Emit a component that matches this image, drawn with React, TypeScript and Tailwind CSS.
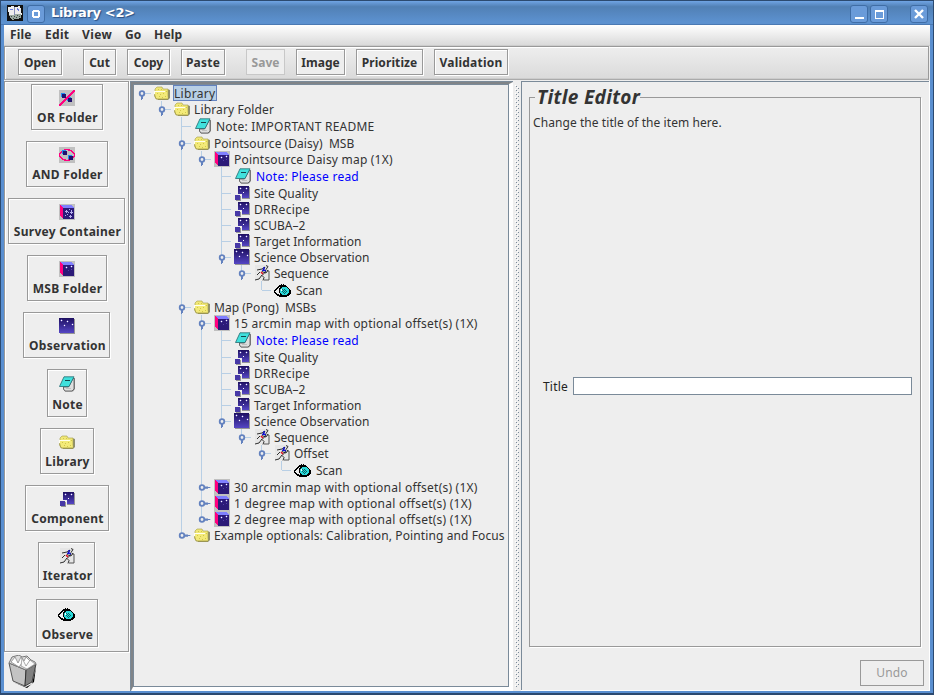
import React from "react";

type IconName = "folder" | "note" | "msb" | "comp" | "obs" | "iter" | "eye" | "or" | "and" | "survey";

const Stars = ({ points }: { points: number[][] }) => (
  <>
    {points.map(([x, y], i) => (
      <g key={i}>
        <path d={`M${x - 1} ${y}h3v1h-3z M${x} ${y - 1}h1v3h-1z`} fill="#5244a6" />
        <path d={`M${x} ${y}h1v1h-1z`} fill="#fff" />
      </g>
    ))}
  </>
);

const Cube = ({ children }: { children: React.ReactNode }) => (
  <>
    <path d="M0 0h16v16H0z" fill="#c0c0c0" />
    <path d="M1 1L4 4v11L1 12z" fill="#ff0080" />
    <path d="M1 1h11l3 3H4z" fill="#8080ff" />
    <path d="M4 4h11v11H4z" fill="#2b1a78" />
    {children}
  </>
);

const MiniCube = ({ x, y }: { x: number; y: number }) => (
  <>
    <path d={`M${x} ${y}h4v4h-4z`} fill="#1c8cf0" />
    <path d={`M${x + 1} ${y + 1}h4v4h-4z`} fill="#20106c" />
  </>
);

const drawings: Record<IconName, React.ReactNode> = {
  or: (
    <>
      <path d="M0 0h16v16H0z" fill="#c0c0c0" />
      <MiniCube x={2} y={3} />
      <MiniCube x={8} y={7} />
      <path d="M0 16L16 0" stroke="#ff0080" strokeWidth="1.8" />
    </>
  ),
  and: (
    <>
      <path d="M0 0h16v16H0z" fill="#c0c0c0" />
      <ellipse cx="8" cy="8" rx="7.3" ry="5.3" fill="none" stroke="#ff0080" strokeWidth="1.3" />
      <MiniCube x={3} y={3} />
      <MiniCube x={9} y={8} />
    </>
  ),
  survey: (
    <Cube>
      <path d="M6 7h3v1H6zM7 6h1v3H7zM10 5h1v1h-1zM12 6h1v1h-1zM11 8h3v1h-3zM12 7h1v3h-1zM8 10h1v1H8zM6 11h1v1H6zM10 12h3v1h-3zM11 11h1v3h-1zM9 8h1v1H9z" fill="#b8b0ee" />
    </Cube>
  ),
  msb: (
    <Cube>
      <Stars points={[[7, 6], [12, 5]]} />
      <path d="M9 9h1v1H9zM12 8h1v1h-1z" fill="#5142a8" />
    </Cube>
  ),
  obs: (
    <>
      <path d="M1 1h15v15H1z" fill="#969696" />
      <path d="M0 0h15v15H0z" fill="url(#night)" />
      <Stars points={[[2, 2], [8, 3], [5, 7], [13, 6]]} />
    </>
  ),
  comp: (
    <>
      <path d="M5 2h11v12H5z" fill="#969696" />
      <path d="M4 1h11v12H4z" fill="url(#night)" />
      <path d="M0 9h8v6H7v1H0z" fill="#eee" />
      <path d="M2 11h5v5H2z" fill="#969696" />
      <path d="M1 10h5v5H1z" fill="#4638a6" />
      <Stars points={[[6, 3], [12, 3]]} />
      <path d="M9 7h1v1H9z" fill="#fff" />
    </>
  ),
  folder: (
    <>
      <path d="M3 6l2-2h8l3 1v8l-2 2H4z" fill="#8f8f70" />
      <path d="M1 12V4l2-2h5l1 2h5v10H3z" fill="#f0e777" stroke="#a39c44" strokeWidth=".6" />
      <path d="M0 6h11l1 1 2 7H3z" fill="#f3ea78" />
      <path d="M0 6h11v1H1v2H0z" fill="#fffff0" />
      <path d="M0 9l2 5h12" fill="none" stroke="#a39c44" strokeWidth=".8" />
      <path d="M3 8h1v1H3zM6 9h1v1H6zM9 8h1v1H9zM5 11h1v1H5zM8 12h1v1H8zM11 11h1v1h-1zM4 4h1v1H4zM7 4h1v1H7zM12 6h1v1h-1z" fill="#d0c64a" />
    </>
  ),
  note: (
    <>
      <path d="M15 2h1v11l-2 2.500H6L4 13v-2" fill="#8a8a8a" />
      <path d="M14 2.500h1V13l-2 2H6l-1.500-2v-2h5z" fill="#dedede" stroke="#555" strokeWidth=".8" />
      <path d="M7 12.500h5" stroke="#b4b4b4" strokeWidth=".7" />
      <path d="M5 .8h10L10 10.500H.5z" fill="#40e0dc" stroke="#246a70" strokeWidth=".8" />
      <path d="M6 4.500h5" stroke="#11454a" strokeWidth="1" />
    </>
  ),
  iter: (
    <>
      <path d="M1 0h14v15H1z" fill="#e6e6e6" />
      <path d="M10 15h5V6h-2" fill="none" stroke="#555" strokeWidth="1" />
      <path d="M12 .5l2 1-2 3-1 3-3 3 2 2-1 3M8 10l-3 4-4 1M3 5l5-1 3-2M6 7l-3 3M9 7l3 1 2-3M11 2l-3 5" fill="none" stroke="#1c1c1c" strokeWidth=".9" />
      <path d="M10 2v3M8 5l4 1" stroke="#0000e8" strokeWidth="1.2" />
      <path d="M7 7l2 2" stroke="#e01020" strokeWidth="1.6" />
    </>
  ),
  eye: (
    <>
      <path d="M0 7l2-3 3-2V1h2V0h1v1h1V0h1v1h2v1l3 2 2 3v3l-3 2-3 1H6l-4-2-2-3z" fill="#000" />
      <path d="M1 7l3-3 2-1-1 3 1 5-3-1z" fill="#eee" />
      <ellipse cx="10.500" cy="7" rx="4.600" ry="4" fill="#2ad8d8" />
      <path d="M8 5h1v1H8zM10 5h1v1h-1zM9 6h1v1H9zM11 6h1v1h-1zM8 7h1v1H8zM10 7h1v1h-1zM12 7h1v1h-1zM9 8h1v1H9zM11 8h1v1h-1zM10 9h1v1h-1z" fill="#0a6466" />
      <path d="M7 5h1v2H7z" fill="#fff" />
    </>
  ),
};

const Icon = ({ name }: { name: IconName }) => {
  if (name === "eye")
    return (
      <svg width="18" height="14" viewBox="0 0 18 14" className="mb-px mt-[3px] block shrink-0" shapeRendering="crispEdges">
        {drawings.eye}
      </svg>
    );
  if (name === "note")
    return (
      <svg width="18" height="18" viewBox="-1 -1 18 18" className="block shrink-0">
        {drawings.note}
      </svg>
    );
  return (
    <svg width="16" height="16" viewBox="0 0 16 16" className="block shrink-0" shapeRendering={name === "iter" || name === "folder" ? "auto" : "crispEdges"}>
      {drawings[name]}
    </svg>
  );
};

type Row = { d: number; icon: IconName; t: string; h?: "open" | "closed"; g?: number[]; last?: boolean; sp?: string; sel?: boolean };

const observation = (g: number[]): Row[] => [
  { d: 4, icon: "note", t: "Note: Please read", g, sp: "tracking-[.24px]" },
  { d: 4, icon: "comp", t: "Site Quality", g },
  { d: 4, icon: "comp", t: "DRRecipe", g, sp: "tracking-[.3px]" },
  { d: 4, icon: "comp", t: "SCUBA–2", g },
  { d: 4, icon: "comp", t: "Target Information", g, sp: "tracking-[.04px]" },
  { d: 4, icon: "obs", t: "Science Observation", h: "open", g, last: true, sp: "tracking-[.06px]" },
  { d: 5, icon: "iter", t: "Sequence", h: "open", g, last: true },
];

const rows: Row[] = [
  { d: 0, icon: "folder", t: "Library", h: "open", sel: true, sp: "tracking-[.3px]" },
  { d: 1, icon: "folder", t: "Library Folder", h: "open", last: true, sp: "tracking-[.14px]" },
  { d: 2, icon: "note", t: "Note: IMPORTANT README", sp: "tracking-[.23px]" },
  { d: 2, icon: "folder", t: "Pointsource (Daisy)  MSB", h: "open", sp: "tracking-[.04px]" },
  { d: 3, icon: "msb", t: "Pointsource Daisy map (1X)", h: "open", g: [2], last: true, sp: "tracking-[.21px]" },
  ...observation([2]),
  { d: 6, icon: "eye", t: "Scan", g: [2], last: true },
  { d: 2, icon: "folder", t: "Map (Pong)  MSBs", h: "open", sp: "tracking-[.02px]" },
  { d: 3, icon: "msb", t: "15 arcmin map with optional offset(s) (1X)", h: "open", g: [2], sp: "tracking-[.23px]" },
  ...observation([2, 3]),
  { d: 6, icon: "iter", t: "Offset", h: "open", g: [2, 3], last: true },
  { d: 7, icon: "eye", t: "Scan", g: [2, 3], last: true },
  { d: 3, icon: "msb", t: "30 arcmin map with optional offset(s) (1X)", h: "closed", g: [2], sp: "tracking-[.23px]" },
  { d: 3, icon: "msb", t: "1 degree map with optional offset(s) (1X)", h: "closed", g: [2], sp: "tracking-[.24px]" },
  { d: 3, icon: "msb", t: "2 degree map with optional offset(s) (1X)", h: "closed", g: [2], last: true, sp: "tracking-[.24px]" },
  { d: 2, icon: "folder", t: "Example optionals: Calibration, Pointing and Focus", h: "closed", last: true, sp: "tracking-[.11px]" },
];

const Branch = ({ row, height }: { row: Row; height: number }) => {
  const c = height / 2;
  return (
    <svg width="20" height={height} className="block shrink-0">
      {row.d > 0 && <path d={`M7 0h1v${row.last ? c : height}h-1z`} fill="#b8cfe5" shapeRendering="crispEdges" />}
      <path d={`M8 ${c}h9v1h-9z`} fill="#b8cfe5" shapeRendering="crispEdges" />
      {row.h && <circle cx="8" cy={c + 0.5} r="2.3" fill="#eee" stroke="#6382bf" strokeWidth="1.8" />}
      {row.h === "open" && <path d={`M7 ${c + 3}h2v3h-1v1h-1z`} fill="#6382bf" />}
      {row.h === "closed" && <path d={`M11 ${c - 0.5}h3v.5h2v1h-2v.7h-3z`} fill="#6382bf" />}
    </svg>
  );
};

const TreeRow = ({ row }: { row: Row }) => {
  const tall = row.icon === "note" || row.icon === "eye";
  const blue = row.t === "Note: Please read";
  return (
    <div className={`flex items-center ${tall ? "h-[18px]" : "h-4"}`}>
      {Array.from({ length: row.d }, (_, i) => (
        <div key={i} className="h-full w-5 shrink-0 pl-[7px]">
          {row.g?.includes(i) && <div className="h-full w-px bg-[#b8cfe5]" />}
        </div>
      ))}
      <Branch row={row} height={tall ? 18 : 16} />
      <Icon name={row.icon} />
      <span
        className={`ml-[3px] h-4 whitespace-pre border pr-px pt-px leading-[14px] ${row.sel ? "border-[#6382bf] bg-[#b8cfe5]" : "border-transparent"} ${blue ? "text-[#0000ff]" : ""} ${row.sp ?? ""}`}
      >
        {row.t}
      </span>
    </div>
  );
};

const tools = [
  { t: "Open", c: "ml-[13px] w-11" },
  { t: "Cut", c: "ml-[21px] w-[33px]" },
  { t: "Copy", c: "ml-[11px] w-[43px]" },
  { t: "Paste", c: "ml-[11px] w-11 tracking-[.2px]" },
  { t: "Save", c: "ml-[21px] w-[39px]", off: true },
  { t: "Image", c: "ml-[11px] w-[49px]" },
  { t: "Prioritize", c: "ml-[11px] w-[67px] tracking-[.1px]" },
  { t: "Validation", c: "ml-[11px] w-[74px] tracking-[.2px]" },
];

const palette: { t: string; i: IconName; c: string }[] = [
  { t: "OR Folder", i: "or", c: "w-[72px] h-[46px]" },
  { t: "AND Folder", i: "and", c: "w-[82px] h-[46px]" },
  { t: "Survey Container", i: "survey", c: "w-[117px] h-[46px]" },
  { t: "MSB Folder", i: "msb", c: "w-[80px] h-[46px]" },
  { t: "Observation", i: "obs", c: "w-[87px] h-[46px]" },
  { t: "Note", i: "note", c: "w-[40px] h-[48px]" },
  { t: "Library", i: "folder", c: "w-[54px] h-[46px]" },
  { t: "Component", i: "comp", c: "w-[84px] h-[46px]" },
  { t: "Iterator", i: "iter", c: "w-[57px] h-[46px]" },
  { t: "Observe", i: "eye", c: "w-[62px] h-[48px]" },
];

const etched = "border border-[#999] shadow-[1px_1px_0_#fff,inset_1px_1px_0_#fff]";

const WinButton = ({ children }: { children: React.ReactNode }) => (
  <div className="flex h-[18px] w-[18px] items-center justify-center rounded-[3px] border border-[#3f6da6] bg-[#6a9bd9]">
    <svg width="14" height="14" viewBox="0 0 14 14" className="shrink-0" fill="none" stroke="#fff" strokeWidth="2" shapeRendering="crispEdges">
      {children}
    </svg>
  </div>
);

const Trash = () => (
  <svg width="30" height="33" viewBox="0 0 30 33" className="ml-1 mt-[3px] block">
    <path d="M5 27l13 5 6-3 4-17-2 15-7 6z" fill="#000" />
    <path d="M1 8l17 7-1 16-12-5z" fill="#c3c3c3" stroke="#333" strokeWidth=".8" />
    <path d="M18 15l10-6-4 18-7 4z" fill="#808080" stroke="#222" strokeWidth=".8" />
    <path d="M1 8l3-6 7-2 3 2 5-1 4 4 4 2 1 2-10 6z" fill="#ddd" stroke="#777" strokeWidth="1" />
    <path d="M3 7l4-5 3 6 3-6 3 4 2-4 4 4-4 6-4-4-3 4z" fill="#fff" stroke="#888" strokeWidth=".8" />
    <path d="M14 3l4 8 4-6 5 4-8 5-6-3z" fill="#fafafa" stroke="#888" strokeWidth=".7" />
  </svg>
);

export default function App() {
  return (
    <div className="flex h-[695px] w-[934px] flex-col overflow-hidden border-b-2 border-l border-r border-t border-[#2c4a70] bg-[#5a8fd0] font-['Noto_Sans',sans-serif] text-[12px] text-[#333]">
      <svg width="0" height="0" className="absolute">
        <defs>
          <linearGradient id="night" x1="0" y1="0" x2="0" y2="1">
            <stop offset="0" stopColor="#1e1060" />
            <stop offset="1" stopColor="#5546c4" />
          </linearGradient>
        </defs>
      </svg>
      <header className="flex h-6 shrink-0 items-center border-b border-[#4a79b3] bg-[linear-gradient(#70a4e4_0,#5180b5_25%,#5c91cf_90%)] pl-[6px] pr-[5px]">
        <svg width="16" height="16" className="block" shapeRendering="crispEdges">
          <path d="M0 0h16v16H0z" fill="#111" />
          <path d="M1 2l5-1 2 1 5-1 2 9-6 1-2-1-5 1z" fill="#eee" />
          <path d="M3 4l3 1M10 3l2 3" stroke="#7080e0" />
          <path d="M7 2h1v9H7z" fill="#8890b8" />
          <path d="M2 10l12-1v4l-9 2z" fill="#9aa9a0" />
          <path d="M4 11h1v1H4zM7 11h1v1H7zM10 10h1v1h-1zM6 13h1v1H6zM9 12h1v1H9zM12 11h1v1h-1z" fill="#3c4a44" />
        </svg>
        <div className="ml-1 mt-[2px]">
          <WinButton>
            <path d="M4 3h6v1h1v6h-1v1H4v-1H3V4h1zM5 5v4h4V5z" fill="#fff" fillRule="evenodd" stroke="none" />
          </WinButton>
        </div>
        <div className="ml-[6px] font-['DejaVu_Sans',sans-serif] text-[13px] font-bold leading-4 tracking-[-.35px] text-white [text-shadow:1px_1px_1px_#2c4f80]">Library &lt;2&gt;</div>
        <div className="ml-auto mt-[2px] flex">
          <WinButton>
            <path d="M3 11h9" />
          </WinButton>
          <div className="ml-[2px]">
            <WinButton>
              <path d="M3 3h9v9H3zM4 5v6h7V5z" fill="#fff" fillRule="evenodd" stroke="none" />
            </WinButton>
          </div>
          <div className="ml-[22px]">
            <WinButton>
              <path d="M3 3l8 8M11 3l-8 8" strokeWidth="2.4" shapeRendering="auto" />
            </WinButton>
          </div>
        </div>
      </header>
      <div className="mb-[2px] ml-[3px] mr-[3px] flex min-h-0 flex-1 flex-col bg-[#eee]">
        <nav className="flex h-[21px] shrink-0 items-center border-b border-[#ccc] bg-gradient-to-b from-white to-[#dadada] pl-[6px] font-bold">
          <span className="w-[35px] tracking-[.2px]">File</span>
          <span className="w-[37px] tracking-[.3px]">Edit</span>
          <span className="w-[43px] tracking-[.4px]">View</span>
          <span className="w-[29px]">Go</span>
          <span className="tracking-[.2px]">Help</span>
        </nav>
        <div className="mr-px flex h-[34px] shrink-0 items-start border border-[#999] border-b-[#aaa] bg-gradient-to-b from-[#eee] to-[#dadada] pt-[2px] shadow-[inset_1px_1px_0_#fff,inset_0_-1px_0_#ccc] font-bold">
          {tools.map((b) => (
            <div key={b.t} className={`flex h-[26px] shrink-0 items-center justify-center bg-[#eee] pt-[2px] ${b.c} ${b.off ? "border border-[#c8c8c8] text-[#999]" : etched}`}>
              {b.t}
            </div>
          ))}
        </div>
        <main className="flex min-h-0 flex-1 pt-px">
          <aside className="w-[126px] shrink-0">
            <div className="mr-px flex h-[571px] flex-col items-center gap-[11px] border border-[#999] pt-[2px] font-bold shadow-[1px_1px_0_#fff,inset_1px_1px_0_#fff]">
              {palette.map((p) => (
                <div key={p.t} className={`flex shrink-0 flex-col items-center pl-px pt-[5px] ${p.c} ${etched}`}>
                  <Icon name={p.i} />
                  <span className="ml-px mt-1 whitespace-nowrap leading-4 tracking-[.28px]">{p.t}</span>
                </div>
              ))}
            </div>
            <Trash />
          </aside>
          <section className="flex w-[383px] shrink-0 border-l border-t border-[#7a8a99]">
            <div className="flex flex-1 border-b-[4px] border-l-2 border-r-[4px] border-t-2 border-b-white border-l-[#808488] border-r-white border-t-[#808488]">
              <div className="flex-1 border border-[#7a8a99]">
                {rows.map((r, i) => (
                  <TreeRow key={i} row={r} />
                ))}
              </div>
            </div>
          </section>
          <div className="flex w-[8px] shrink-0 justify-center py-1">
            <svg width="4" height="100%">
              <defs>
                <pattern id="grip" width="4" height="4" patternUnits="userSpaceOnUse">
                  <path d="M1 1h1v1h-1zM3 3h1v1h-1z" fill="#7a8a99" />
                  <path d="M0 0h1v1h-1zM2 2h1v1h-1z" fill="#fff" />
                </pattern>
              </defs>
              <rect width="4" height="100%" fill="url(#grip)" />
            </svg>
          </div>
          <section className="flex flex-1 flex-col border-b border-r border-white shadow-[inset_1px_1px_0_#7a8a99]">
            <fieldset className="ml-2 mr-2 mt-[4px] flex h-[562px] min-w-0 flex-col border border-[#999] px-[3px] shadow-[1px_1px_0_#fff]">
              <legend className="ml-[2px] pl-[2px] text-[19px] font-bold italic leading-[24px] tracking-[.35px]">Title Editor</legend>
              <p className="mt-[6px] leading-4 tracking-[.07px]">Change the title of the item here.</p>
              <label className="mr-[5px] mt-[245px] flex items-center pl-[10px] text-[#222]">
                <span className="w-[30px] pt-[2px] leading-[18px] tracking-[.2px]">Title</span>
                <input className="h-[18px] min-w-0 flex-1 border border-[#7a8a99] bg-white" />
              </label>
            </fieldset>
            <button className="ml-auto mr-[5px] mt-[13px] h-[26px] w-16 border border-[#999] tracking-[.2px] text-[#999]">Undo</button>
          </section>
        </main>
      </div>
    </div>
  );
}
